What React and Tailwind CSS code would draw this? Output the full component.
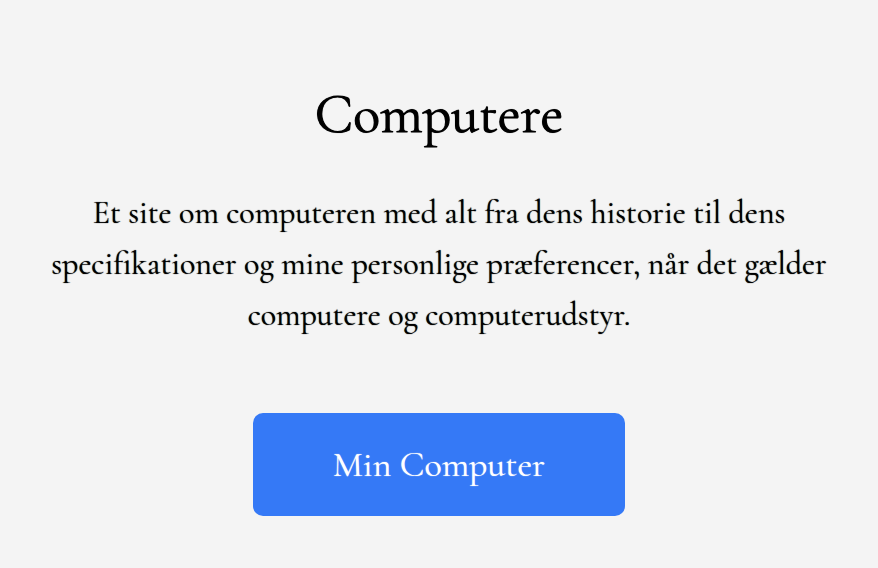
export default function App() {
  return (
    <main className="flex min-h-screen flex-col items-center bg-[#f4f4f4] px-10 pt-20 pb-13 text-center font-['Cormorant_Garamond','EB_Garamond','Liberation_Serif',serif] text-black [text-shadow:0_0_1px_currentColor]">
      <h1 className="text-[56px] leading-[68px] [-webkit-text-stroke:1px_currentColor]">Computere</h1>
      <p className="mt-[39px] text-[32px] leading-[51px]">
        Et site om computeren med alt fra dens historie til dens
        <br />
        specifikationer og mine personlige præferencer, når det gælder
        <br />
        computere og computerudstyr.
      </p>
      <button type="button" className="mt-[73px] rounded-[10px] bg-[#3579f6] px-20 py-7 text-[36px] leading-[47px] text-white [text-shadow:0_0_1px_currentColor]">
        Min Computer
      </button>
    </main>
  );
}
